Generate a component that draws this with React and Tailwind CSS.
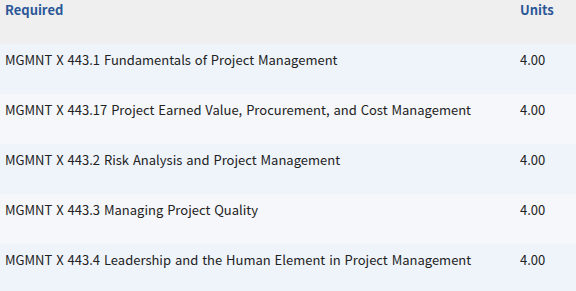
import React from "react";

const courses = [
  { code: "MGMNT X 443.1", title: "Fundamentals of Project Management", units: "4.00" },
  { code: "MGMNT X 443.17", title: "Project Earned Value, Procurement, and Cost Management", units: "4.00" },
  { code: "MGMNT X 443.2", title: "Risk Analysis and Project Management", units: "4.00" },
  { code: "MGMNT X 443.3", title: "Managing Project Quality", units: "4.00" },
  { code: "MGMNT X 443.4", title: "Leadership and the Human Element in Project Management", units: "4.00" },
];

export default function App() {
  return (
    <div className="w-[576px] h-[291px] overflow-hidden bg-white font-['Noto_Sans_CJK_KR','Noto_Sans',sans-serif] text-[13px] text-[#222]">
      <div className="grid grid-cols-[515px_1fr] h-[44px] bg-[#efefef] pl-[5px] text-[#2b5797] font-bold leading-[20px]">
        <div>Required</div>
        <div>Units</div>
      </div>
      {courses.map((c, i) => (
        <div
          key={c.code}
          className={
            "grid grid-cols-[515px_1fr] h-[50px] pl-[5px] pt-[6px] leading-[20px] " +
            (i % 2 === 0 ? "bg-[#eff4fb]" : "bg-[#f6f7fa]")
          }
        >
          <div className="[word-spacing:1px]">
            {c.code} {c.title}
          </div>
          <div>{c.units}</div>
        </div>
      ))}
    </div>
  );
}
